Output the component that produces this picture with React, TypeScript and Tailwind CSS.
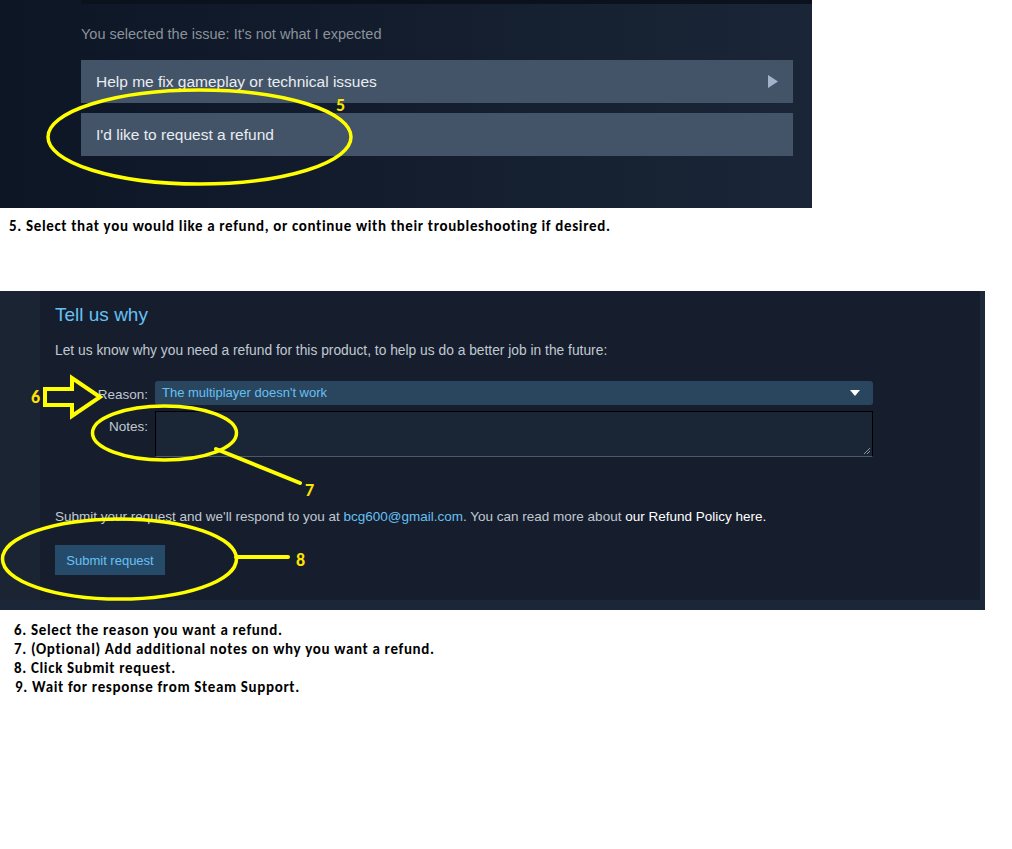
import React from "react";

const steam = { fontFamily: '"Liberation Sans", Arial, sans-serif' };
const calibri = { fontFamily: 'Carlito, Lato, "Open Sans", sans-serif' };

const Mark = ({ n, className }: { n: string; className: string }) => (
  <span
    className={"absolute text-[18px] font-bold leading-none text-[#ffe400] " + className}
    style={calibri}
  >
    {n}
  </span>
);

export default function App() {
  return (
    <div className="relative w-[1012px] h-[849px] bg-white overflow-hidden">
      {/* step 5 screenshot */}
      <div
        className="relative w-[812px] h-[208px] bg-gradient-to-r from-[#0d1625] via-[#131d2e] to-[#1a2637]"
        style={steam}
      >
        <div className="ml-[81px] h-[4px] bg-[#0b121d]"></div>
        <div className="pl-[81px] pr-[19px] pt-[20px]">
          <div className="text-[14.5px] leading-[20px] text-[#8b929a]">
            You selected the issue: It's not what I expected
          </div>
          <div className="mt-[16px] flex flex-col gap-[10px]">
            <div className="h-[43px] bg-[#445468] flex items-center justify-between pl-[15px] pr-[15px] text-[15.5px] text-[#e8edf2]">
              <span>Help me fix gameplay or technical issues</span>
              <svg width="10" height="13" viewBox="0 0 10 13">
                <polygon points="0,0 10,6.5 0,13" fill="#a2b4cc" />
              </svg>
            </div>
            <div className="h-[43px] bg-[#445468] flex items-center pl-[15px] text-[15.5px] text-[#e8edf2]">
              I'd like to request a refund
            </div>
          </div>
        </div>
      </div>

      <div
        className="pl-[9px] pt-[9px] text-[15px] tracking-[0.65px] font-bold leading-[18px] text-black"
        style={calibri}
      >
        5. Select that you would like a refund, or continue with their troubleshooting if desired.
      </div>

      {/* steps 6-8 screenshot */}
      <div className="mt-[56px] w-[985px] bg-[#1b2638]" style={steam}>
        <div className="flex">
          <div className="w-[40px] bg-[#1b2433]"></div>
          <div className="w-[940px] h-[309px] bg-[#161e2d] pl-[15px] pt-[13px]">
            <div className="text-[19px] leading-[22px] text-[#66c0f4]">Tell us why</div>
            <div className="mt-[15px] text-[13.8px] leading-[20px] text-[#c0c9d2]">
              Let us know why you need a refund for this product, to help us do a better job in the future:
            </div>
            <div className="mt-[20px] flex items-center">
              <div className="w-[100px] pr-[7px] text-right text-[13.5px] text-[#c0c9d2] pt-[4px]">Reason:</div>
              <div className="w-[718px] h-[24px] rounded-[3px] bg-[#2a465e] flex items-center justify-between pl-[7px] pr-[13px] text-[13px] text-[#66c0f4]">
                <span>The multiplayer doesn't work</span>
                <svg width="10" height="6" viewBox="0 0 10 6">
                  <polygon points="0,0 10,0 5,6" fill="#ffffff" />
                </svg>
              </div>
            </div>
            <div className="mt-[6px] flex items-start">
              <div className="w-[100px] pr-[7px] pt-[6px] text-right text-[13.5px] text-[#c0c9d2]">Notes:</div>
              <div className="relative w-[718px] h-[46px] bg-[#1a2536] border border-black border-b-[#4a5868]">
                <svg className="absolute right-[1px] bottom-[1px]" width="8" height="8" viewBox="0 0 8 8">
                  <line x1="1" y1="7" x2="7" y2="1" stroke="#8c96a0" strokeWidth="1" />
                  <line x1="4" y1="7" x2="7" y2="4" stroke="#8c96a0" strokeWidth="1" />
                </svg>
              </div>
            </div>
            <div className="mt-[50px] text-[13.5px] leading-[20px] text-[#c0c9d2]">
              Submit your request and we'll respond to you at{" "}
              <span className="text-[#66c0f4]">bcg600@gmail.com</span>. You can read more about{" "}
              <span className="text-white">our Refund Policy here.</span>
            </div>
            <div className="mt-[18px] w-[110px] h-[30px] bg-[#264b6a] flex items-center justify-center text-[13px] text-[#67c1f5]">
              Submit request
            </div>
          </div>
          <div className="w-[5px] bg-[#1d2839]"></div>
        </div>
        <div className="h-[10px] bg-[#1b2638]"></div>
      </div>

      <div
        className="pl-[14px] pt-[11px] text-[15px] tracking-[0.65px] font-bold leading-[19px] text-black"
        style={calibri}
      >
        <div>6. Select the reason you want a refund.</div>
        <div>7. (Optional) Add additional notes on why you want a refund.</div>
        <div>8. Click Submit request.</div>
        <div className="pl-[1px]">9. Wait for response from Steam Support.</div>
      </div>

      {/* yellow annotations */}
      <svg className="absolute left-0 top-0 pointer-events-none" width="1012" height="849">
        <g fill="none" stroke="#ffff00" strokeWidth="3.5">
          <ellipse cx="199.5" cy="137" rx="151.5" ry="47" />
          <ellipse cx="164.5" cy="433" rx="72" ry="27" />
          <ellipse cx="119.5" cy="559" rx="117" ry="40" />
        </g>
        <g stroke="#ffff00" strokeWidth="4" fill="none">
          <line x1="216" y1="449" x2="300" y2="483" strokeLinecap="round" />
          <line x1="236" y1="557" x2="288" y2="557" strokeLinecap="round" />
          <polygon points="45,389 72,389 72,378 100,397 72,416 72,405 45,405" strokeLinejoin="miter" />
        </g>
      </svg>
      <Mark n="5" className="left-[336px] top-[96px]" />
      <Mark n="6" className="left-[31px] top-[388px]" />
      <Mark n="7" className="left-[305px] top-[481px]" />
      <Mark n="8" className="left-[296px] top-[551px]" />
    </div>
  );
}
